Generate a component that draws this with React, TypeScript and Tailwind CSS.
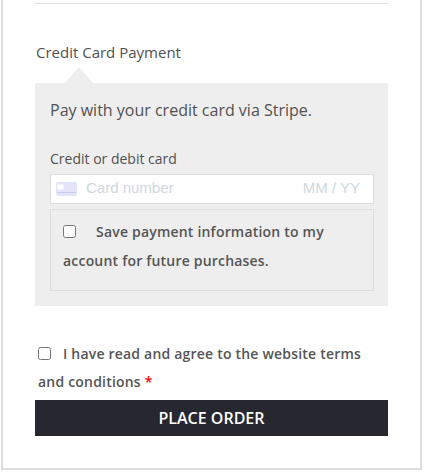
export default function App() {
  return (
    <div className="w-[426px] h-[474px] bg-white font-['Open_Sans',sans-serif] overflow-hidden">
      <div className="ml-px w-[421px] h-[470px] border-x-2 border-b-2 border-[#dddddd] pl-[32px] pr-[32px] pt-[3px]">
        <div className="border-t border-[#dddddd] pt-[38px]">
          <div className="text-[15px] leading-[20px] text-[#515151] pl-px">Credit Card Payment</div>
          {/* little arrow above the payment box */}
          <div className="ml-[30px] mt-[5px] h-0 w-0 border-x-[14px] border-b-[16px] border-x-transparent border-b-[#eeeeee]" />
          <div className="bg-[#eeeeee] h-[223px] pl-[15px] pr-[14px] pt-[16px]">
            <p className="text-[16px] leading-[22px] text-[#515151]">Pay with your credit card via Stripe.</p>
            <div className="mt-[28px] text-[14px] leading-[20px] text-[#515151]">Credit or debit card</div>
            <div className="mt-[5px] h-[30px] bg-white border border-[#dddddd] flex items-center pl-[5px] pr-[13px] font-['Liberation_Sans',sans-serif] text-[15px] text-[#cfd7df]">
              <svg width="21" height="14" viewBox="0 0 21 14" className="shrink-0">
                <rect width="21" height="14" rx="2" fill="#e1e4fb" />
                <rect x="1.5" y="2.5" width="6" height="5" fill="#ffffff" />
                <rect x="1.5" y="10" width="18" height="1" fill="#c5cbf3" />
              </svg>
              <span className="ml-[9px] mb-[2px]">Card number</span>
              <span className="ml-auto mb-[2px]">MM / YY</span>
            </div>
            <div className="mt-[5px] h-[82px] border border-[#dddddd] pl-[12px] pr-[12px] pt-[7px] text-[14px] leading-[29px] font-semibold tracking-[0.2px] text-[#555555]">
              <input type="checkbox" className="w-[13px] h-[13px] align-[-1px] mr-[20px]" />
              Save payment information to my account for future purchases.
            </div>
          </div>
          <div className="mt-[34px] pl-[3px] text-[14px] leading-[28px] font-semibold tracking-[0.2px] text-[#555555]">
            <input type="checkbox" className="w-[13px] h-[13px] align-[-1px] mr-[12px]" />
            I have read and agree to the website terms and conditions <span className="text-[#ff0000]">*</span>
          </div>
          <button className="mt-[4px] block w-full h-[36px] bg-[#272730] text-white text-[16px] font-semibold text-center">PLACE ORDER</button>
        </div>
      </div>
    </div>
  )
}
